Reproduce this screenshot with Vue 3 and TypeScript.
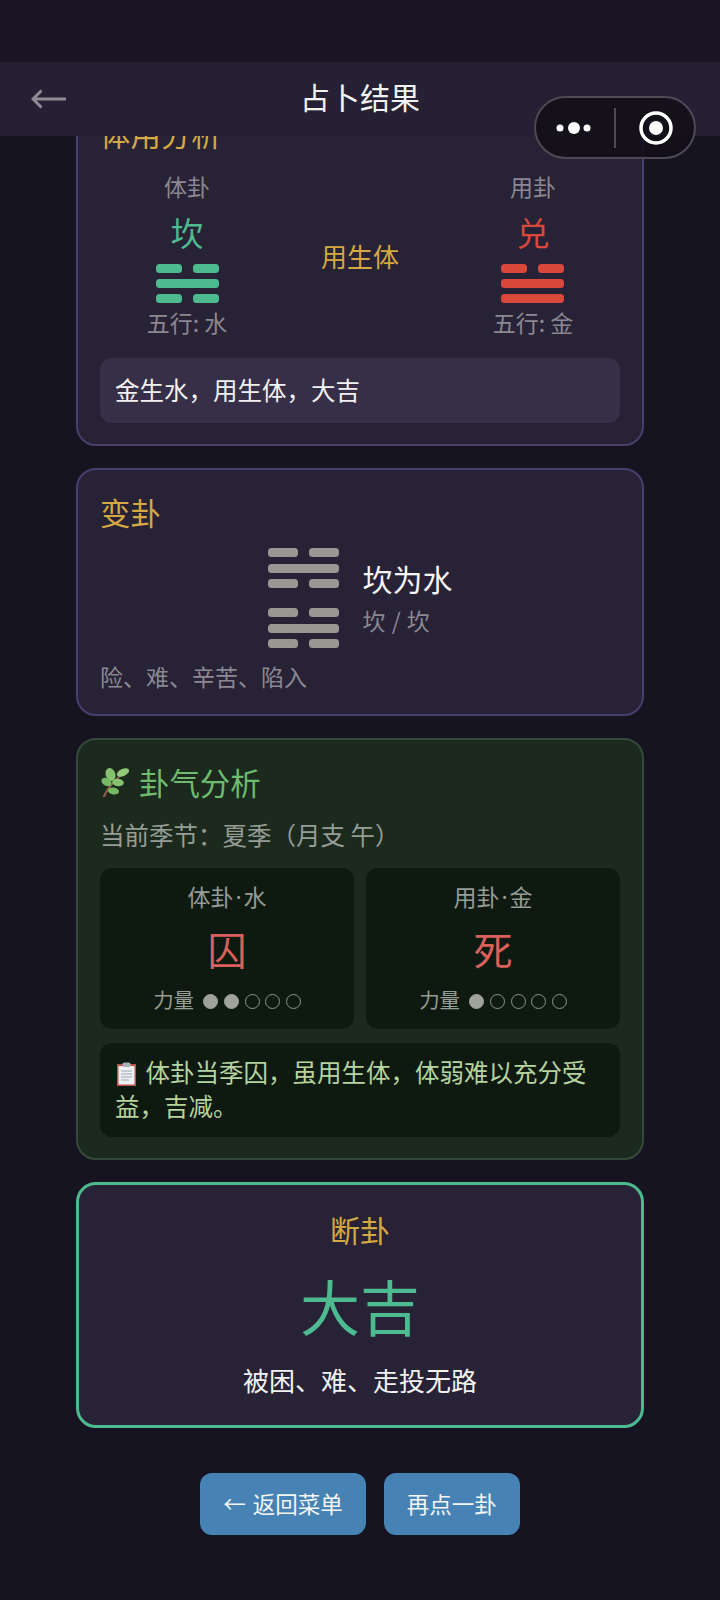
<script setup lang="ts">
const kan = [0, 1, 0];
const dui = [0, 1, 1];

const powerRows = [
  { palace: "体卦", element: "水", state: "囚", power: 2 },
  { palace: "用卦", element: "金", state: "死", power: 1 },
];
</script>

<template>
  <div class="page">
    <main class="content">
      <section class="card">
        <h2 class="title gold">体用分析</h2>
        <div class="tiyong">
          <div class="side">
            <div class="label">体卦</div>
            <div class="gua green">坎</div>
            <div class="hex small green-bars">
              <div v-for="(l, i) in kan" :key="i" class="line">
                <i></i><i v-if="!l"></i>
              </div>
            </div>
            <div class="label">五行: 水</div>
          </div>
          <div class="relation">用生体</div>
          <div class="side">
            <div class="label">用卦</div>
            <div class="gua red">兑</div>
            <div class="hex small red-bars">
              <div v-for="(l, i) in dui" :key="i" class="line">
                <i></i><i v-if="!l"></i>
              </div>
            </div>
            <div class="label">五行: 金</div>
          </div>
        </div>
        <div class="note">金生水，用生体，大吉</div>
      </section>

      <section class="card">
        <h2 class="title gold">变卦</h2>
        <div class="change">
          <div class="stack">
            <div class="hex large gray-bars">
              <div v-for="(l, i) in kan" :key="i" class="line">
                <i></i><i v-if="!l"></i>
              </div>
            </div>
            <div class="hex large gray-bars">
              <div v-for="(l, i) in kan" :key="i" class="line">
                <i></i><i v-if="!l"></i>
              </div>
            </div>
          </div>
          <div class="change-text">
            <div class="change-name">坎为水</div>
            <div class="change-sub">坎 / 坎</div>
          </div>
        </div>
        <p class="desc">险、难、辛苦、陷入</p>
      </section>

      <section class="card qi">
        <h2 class="title qi-title">
          <svg class="herb" viewBox="0 0 28 29" width="28" height="29">
            <path d="M3 28.5C6 21 13 13 21 6" fill="none" stroke="#8c5a48" stroke-width="2.2" stroke-linecap="round" />
            <ellipse cx="9.5" cy="6.5" rx="4.8" ry="6.6" fill="#86c270" transform="rotate(-18 9.5 6.5)" />
            <ellipse cx="22" cy="4.5" rx="6.6" ry="3.6" fill="#8fca78" transform="rotate(-25 22 4.5)" />
            <ellipse cx="5.5" cy="14" rx="5.4" ry="3.8" fill="#76b863" transform="rotate(30 5.5 14)" />
            <ellipse cx="17" cy="14.5" rx="5.8" ry="3.8" fill="#86c270" transform="rotate(5 17 14.5)" />
            <ellipse cx="12.5" cy="23" rx="5.6" ry="3.5" fill="#76b863" transform="rotate(10 12.5 23)" />
          </svg>
          卦气分析
        </h2>
        <div class="season">当前季节：夏季（月支 午）</div>
        <div class="power-grid">
          <div v-for="row in powerRows" :key="row.palace" class="power-box">
            <div class="power-label">{{ row.palace }}<span class="mid-dot">·</span>{{ row.element }}</div>
            <div class="power-state">{{ row.state }}</div>
            <div class="power-line">
              <span class="power-word">力量</span>
              <span class="dots">
                <span v-for="n in 5" :key="n" class="dot" :class="{ on: n <= row.power }"></span>
              </span>
            </div>
          </div>
        </div>
        <div class="qi-note">
          <svg class="clip" viewBox="0 0 22 24" width="22" height="24">
            <rect x="2" y="2" width="19" height="22" fill="#b9524a" />
            <rect x="3.5" y="4" width="16" height="18.5" fill="#eef1f3" />
            <rect x="7.5" y="0.5" width="8" height="4.5" rx="1.5" fill="#aab0b8" />
            <path d="M6 9h11M6 12h11M6 15h11M6 18h8" stroke="#9fa8b4" stroke-width="1.2" />
          </svg>
          体卦当季囚，虽用生体，体弱难以充分受益，吉减。
        </div>
      </section>

      <section class="card result">
        <div class="result-title">断卦</div>
        <div class="result-value">大吉</div>
        <div class="result-desc">被困、难、走投无路</div>
      </section>

      <div class="actions">
        <button class="btn">← 返回菜单</button>
        <button class="btn">再点一卦</button>
      </div>
    </main>

    <div class="status"></div>
    <header class="nav">
      <svg class="back" viewBox="0 0 36 20" width="36" height="20">
        <path d="M35 10H3M10.5 1.5 2 10l8.5 8.5" fill="none" stroke="#8f8b95" stroke-width="3" />
      </svg>
      <span class="nav-title">占卜结果</span>
    </header>
    <div class="capsule">
      <svg viewBox="0 0 162 63" width="162" height="63">
        <circle cx="26" cy="32" r="3.5" fill="#fff" />
        <circle cx="40" cy="32" r="6" fill="#fff" />
        <circle cx="53" cy="32" r="3.5" fill="#fff" />
        <path d="M81 12v40" stroke="#4d4a55" stroke-width="2" />
        <circle cx="122" cy="32" r="15" fill="none" stroke="#fff" stroke-width="3.5" />
        <circle cx="122" cy="32" r="7" fill="#fff" />
      </svg>
    </div>
  </div>
</template>

<style>
body {
  background: #161421;
}
</style>

<style scoped>
.page {
  position: relative;
  width: 720px;
  height: 1600px;
  overflow: hidden;
  background: #161421;
  font-family: "Noto Sans CJK SC", "Noto Sans", sans-serif;
  color: #f0f0f0;
}
.status {
  position: absolute;
  top: 0;
  left: 0;
  right: 0;
  height: 62px;
  background: #191524;
}
.nav {
  position: absolute;
  top: 62px;
  left: 0;
  right: 0;
  height: 74px;
  background: #252033;
  display: flex;
  align-items: center;
  justify-content: center;
}
.back {
  position: absolute;
  left: 31px;
  top: 27px;
}
.nav-title {
  font-size: 30px;
  margin-bottom: 6px;
  color: #f2f2f2;
}
.capsule {
  position: absolute;
  top: 96px;
  left: 534px;
  width: 162px;
  height: 63px;
  box-sizing: border-box;
  border: 2px solid #4d4a55;
  border-radius: 32px;
  background: rgba(18, 15, 24, 0.88);
}
.capsule svg {
  display: block;
  margin: -2px;
}
.content {
  padding: 89px 76px 0;
}
.card {
  box-sizing: border-box;
  border: 2px solid #4a3f6c;
  border-radius: 20px;
  background: #272235;
  padding: 22px 22px 21px;
  margin-bottom: 22px;
}
.title {
  margin: 0;
  padding-bottom: 2px;
  font-size: 30.4px;
  line-height: 40px;
  font-weight: 400;
}
.gold {
  color: #d4a843;
}
.tiyong {
  display: flex;
  justify-content: space-around;
  align-items: center;
  margin-top: 15px;
}
.side {
  display: flex;
  flex-direction: column;
  align-items: center;
}
.label {
  font-size: 23px;
  line-height: 32px;
  color: #8c8892;
}
.gua {
  font-size: 33px;
  line-height: 46px;
  margin-top: 7px;
}
.green {
  color: #4dba8f;
}
.red {
  color: #d9483b;
}
.relation {
  font-size: 26px;
  margin-top: 3px;
  color: #d4a843;
}
.hex {
  display: flex;
  flex-direction: column;
}
.hex.small {
  width: 63px;
  gap: 6px;
  margin: 9px 0 3px;
}
.hex.large {
  width: 71px;
  gap: 6.5px;
}
.line {
  display: flex;
  justify-content: space-between;
  gap: 11px;
}
.line i {
  flex: 1;
  height: 9px;
  border-radius: 3.5px;
  background: currentColor;
}
.green-bars {
  color: #4dba8f;
}
.red-bars {
  color: #d9483b;
}
.gray-bars {
  color: #9a9691;
}
.note {
  margin-top: 20px;
  border-radius: 12px;
  background: #372f48;
  padding: 14px 15px 15px;
  font-size: 24.5px;
  line-height: 36px;
  color: #f2f2f2;
}
.change {
  display: flex;
  justify-content: center;
  align-items: center;
  gap: 24px;
  margin-top: 14px;
}
.stack {
  height: 100px;
  display: flex;
  flex-direction: column;
  gap: 20px;
}
.change-text {
  margin-bottom: 4px;
}
.change-name {
  font-size: 30px;
  line-height: 44px;
  color: #f5f5f5;
}
.change-sub {
  font-size: 23px;
  word-spacing: 1px;
  line-height: 32px;
  margin-top: 4px;
  color: #8c8892;
}
.desc {
  margin: 11px 0 0;
  font-size: 23px;
  line-height: 34px;
  color: #8c8892;
}
.qi {
  background: #1c2a1e;
  border-color: #35493a;
}
.qi-title {
  color: #6fbb70;
  display: flex;
  align-items: center;
  gap: 10px;
}
.herb {
  flex: none;
  margin-left: 1px;
}
.season {
  margin-top: 14px;
  font-size: 24.5px;
  line-height: 34px;
  color: #969c96;
}
.power-grid {
  display: grid;
  grid-template-columns: 1fr 1fr;
  gap: 12px;
  margin-top: 16px;
}
.power-box {
  height: 161px;
  box-sizing: border-box;
  padding-top: 12px;
  border-radius: 12px;
  background: #0e1a0f;
  text-align: center;
}
.power-label {
  font-size: 23px;
  line-height: 32px;
  color: #969c96;
}
.mid-dot {
  font-family: "Noto Sans", sans-serif;
  margin: 0 2px;
}
.power-state {
  margin-top: 9px;
  font-size: 39px;
  line-height: 52px;
  color: #d9605c;
}
.power-line {
  height: 30px;
  margin-top: 12px;
  display: flex;
  justify-content: center;
  align-items: center;
  gap: 9px;
  font-size: 20.5px;
  color: #969c96;
}
.power-word {
  margin-bottom: 4px;
}
.dots {
  display: flex;
  gap: 5.7px;
}
.dot {
  box-sizing: border-box;
  width: 15px;
  height: 15px;
  border-radius: 50%;
  border: 1px solid #8d958d;
}
.dot.on {
  background: #a0a39c;
  border-color: #a0a39c;
}
.qi-note {
  margin-top: 14px;
  border-radius: 12px;
  background: #0e1a0f;
  padding: 12px 15px 14px;
  font-size: 24.5px;
  line-height: 34px;
  color: #b6d3a0;
}
.clip {
  vertical-align: -4px;
  margin-right: 3px;
}
.result {
  border: 3px solid #4dba8f;
  height: 246px;
  padding: 23px 22px 0;
  text-align: center;
}
.result-title {
  font-size: 30px;
  line-height: 42px;
  color: #d4a843;
}
.result-value {
  margin-top: 13px;
  font-size: 60px;
  line-height: 84px;
  color: #4dba8f;
}
.result-desc {
  margin-top: 14px;
  font-size: 26px;
  line-height: 38px;
  color: #f2f2f2;
}
.actions {
  display: flex;
  justify-content: center;
  gap: 18px;
  margin-top: 45px;
}
.btn {
  height: 62px;
  padding: 0 23px 2px;
  border: none;
  border-radius: 12px;
  background: #4682b4;
  color: #f5f5f5;
  font-family: inherit;
  font-size: 22.5px;
  word-spacing: 2px;
}
</style>
